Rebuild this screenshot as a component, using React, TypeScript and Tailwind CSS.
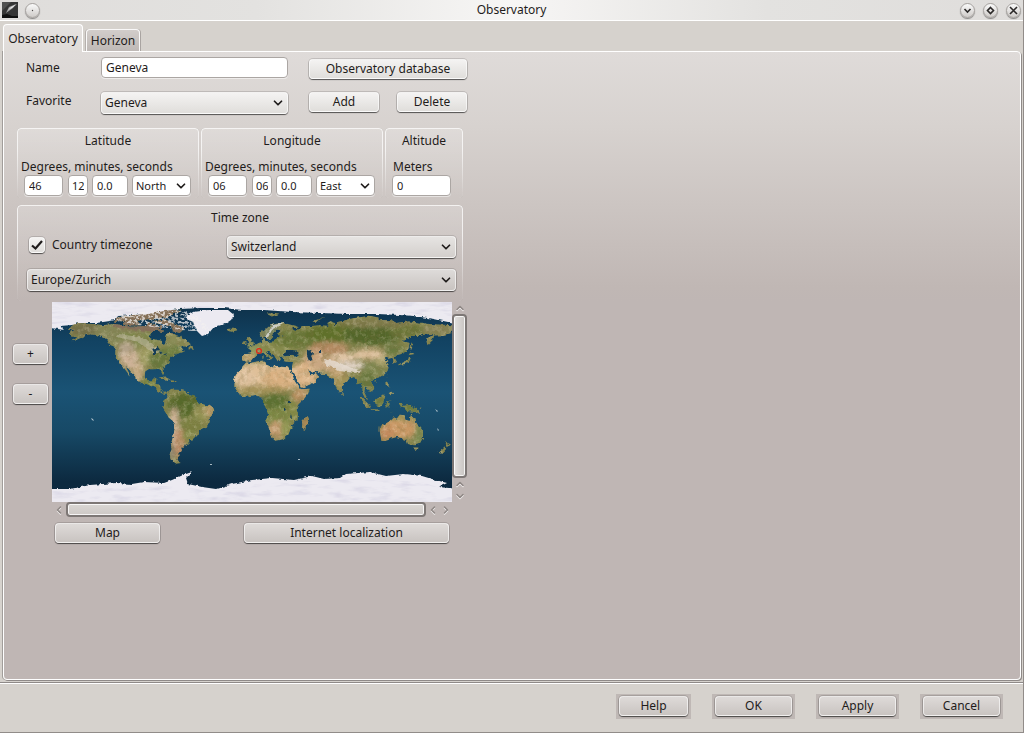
import type { ReactNode } from 'react';
import { ChevronDown, ChevronLeft, ChevronRight, ChevronUp } from 'lucide-react';

const RAISED =
  'rounded-[4px] border border-white/60 shadow-[0_0_0_1px_rgba(0,0,0,0.13),0_1px_1px_rgba(0,0,0,0.55)]';
const FACE_LIGHT = 'bg-linear-to-b from-[#f4f3f2] to-[#e0dedb]';
const FACE_DARK = 'bg-linear-to-b from-[#dedad8] to-[#c9c4c1]';
const FIELD =
  'h-[21px] min-w-0 rounded-[4px] border border-[#aba6a3] bg-white px-1 shadow-[0_1px_0_rgba(255,255,255,0.5)] outline-none';

function Button({ children, className = '', face = FACE_LIGHT, label }: { children: ReactNode; className?: string; face?: string; label?: string }) {
  return (
    <button type="button" aria-label={label} className={`flex h-5 items-center justify-center ${RAISED} ${face} ${className}`}>
      {children}
    </button>
  );
}

function Select({ label, options, className = '', look }: { label: string; options: string[]; className?: string; look: string }) {
  return (
    <div className={`relative ${className}`}>
      <select aria-label={label} className={`block w-full appearance-none pr-6 pl-[3px] outline-none ${look}`}>
        {options.map((o) => (
          <option key={o}>{o}</option>
        ))}
      </select>
      <ChevronDown className="pointer-events-none absolute top-1 right-[3px] size-3.5" strokeWidth={3} />
    </div>
  );
}

function Group({ title, className = '', children }: { title: string; className?: string; children: ReactNode }) {
  return (
    <fieldset
      aria-label={title}
      className={`relative min-w-0 rounded-[4px] bg-linear-to-b from-white/20 to-transparent before:pointer-events-none before:absolute before:inset-0 before:rounded-[4px] before:border before:border-white/70 before:mask-b-from-30% before:shadow-[-1px_0_0_rgba(0,0,0,0.15),1px_0_0_rgba(0,0,0,0.15)] ${className}`}
    >
      <div className="pt-1 text-center leading-[18px]">{title}</div>
      {children}
    </fieldset>
  );
}

function Coordinate({ title, degrees, minutes, options }: { title: string; degrees: string; minutes: string; options: string[] }) {
  return (
    <Group title={title} className="h-[70px] w-[182px]">
      <div className="pt-[9px] pl-1 leading-4">Degrees, minutes, seconds</div>
      <div className="flex pl-[7px] text-[11px]">
        <input aria-label={`${title} degrees`} defaultValue={degrees} className={`${FIELD} w-[39px]`} />
        <input aria-label={`${title} minutes`} defaultValue={minutes} className={`${FIELD} ml-[5px] w-5 !px-[3px]`} />
        <input aria-label={`${title} seconds`} defaultValue="0.0" className={`${FIELD} ml-1 w-9`} />
        <Select label={`${title} hemisphere`} options={options} className="ml-1 w-[59px]" look={FIELD} />
      </div>
    </Group>
  );
}

const LAND = [
  // North and Central America
  '-168,66 -163,67 -162,70 -156,71 -150,70.5 -141,70 -135,69 -128,70 -120,69.5 -115,68 -108,68 -101,68 -96,68 -94,72 -90,69 -86,68 -82,69 -82,67 -87,65 -92,62 -94,59 -92,57 -87,56 -82,55 -82,52.5 -80,51 -79,53 -77,56 -78,59 -77,62 -73,62 -70,61 -69,59 -66,58.5 -64,60 -62,57 -58,54 -56,52 -60,50 -66,50 -69,48 -65,49 -64,47 -61,46 -64,44.5 -66,44 -70,43.5 -70,42 -74,40.5 -76,37 -76,35 -81,31.5 -80,27 -81,25 -83,29 -85,30 -90,29.5 -94,29.5 -97,27.5 -97.5,22 -95,18.5 -91,18.5 -90,21 -87,21.5 -88,16 -84,15.8 -83,11 -81,9 -79,9.5 -77,8.5 -78,7.5 -80,7.5 -83,8.5 -86,10 -88,13 -92,14.5 -95,16 -100,17 -105,20 -106,23 -109,26 -112,30 -114.5,31.5 -112,27 -110,23 -112,25 -115,29 -117,32.5 -120,34.5 -122,37 -124,40 -124,46 -123,49 -128,51 -131,55 -135,58 -140,60 -146,61 -151,60 -154,58 -160,55.5 -164,54.5 -158,58 -162,59 -165,61 -164,63.5 -161,64.5 -166,65',
  // Arctic islands
  '-125,72 -122,76 -115,77 -110,78 -100,79 -96,83 -80,83 -64,83 -70,80 -78,76 -90,75 -98,74 -108,73 -117,73',
  '-117,70 -115,73 -105,73 -102,69 -110,69',
  '-90,73 -80,74 -72,71 -67,69 -62,66 -66,62 -72,64 -73,67 -80,70 -88,71',
  '-86,66 -80,65 -82,63 -86,64',
  // Newfoundland, Cuba, Hispaniola
  '-59,48 -56,51 -53,47 -58,47.5',
  '-85,22 -80,23 -74,20 -78,20',
  '-74,19.5 -69,19 -69,18 -74,18',
  // South America
  '-77,8.5 -75,11 -72,12.3 -71,11 -68,11 -64,10.5 -61,10 -58,7 -54,6 -51,4 -50,0 -48,-1 -44,-2.5 -40,-3 -37,-5 -35,-6 -35,-9 -39,-13 -39,-18 -41,-22 -45,-23.5 -48.5,-26 -49,-29 -53,-33 -55,-35 -58,-34 -57,-37 -62,-39 -62,-41 -65,-41 -64,-43 -67,-46 -66,-48 -69,-51 -68,-53 -65,-55 -69,-55.5 -74,-52 -75,-47 -73,-42 -74,-38 -71.5,-30 -70,-20 -72,-17 -76,-14 -79,-8 -81,-5 -80,-2.5 -80,1 -77,4 -77.5,7',
  // Iceland, Britain, Ireland
  '-24,65.5 -21,66 -15,66 -14,64.5 -19,63.3 -23,64',
  '-5,50 1,51 1.5,53 -1,54.5 -2,57.5 -5,58.5 -6,56 -3,54 -5,52',
  '-10,52 -6,52.3 -6,55 -9,54.5',
  // Eurasia
  '-9,43 -2,43.5 -1,46 -4.5,48.5 2,51 5,53 8,54 8,57 10.5,57.5 11,54 14,54 19,54.5 21,57 24,59 29,60 23,60 22,62 25,65 22,66 17,61 19,60 16,56 13,55.5 11,59 8,58 5,60 6,62.5 11,65 15,68.5 21,70.5 28,71 40,68 40,66.5 34,66.5 38,64 42,66.5 44,68.5 53,68.5 60,69 68,68.5 67,71 70,73 73,71 73,68 76,72 81,73 87,75 98,76.5 104,77.7 113,76 113,73.5 125,73.5 129,71 140,72.5 150,71.5 160,70 170,69.5 180,69 180,65 177,63 179,62 170,60 163,59.8 162,56 157,51 156,57 163,61.5 156,61 150,59.5 142,59.5 135,54.5 141,53 140,48 135,43.5 130,42.5 127.5,40 129.5,36 126.5,34.5 126,37.5 125,39.5 121.5,39 122,40.8 118,39 122,37 119.5,35 122,31 121,28 118,24.5 113,22 109,21 106,19 109,13 109,11.5 105,9 105,10.5 101,13 100,9 103.5,2 101,3 98.5,8 98.5,13 97,17 94,16 94,18 91,22.5 87,21 82,17 80,13.5 80,10 77.5,8 75,12.5 73,19 72.5,21.5 69,21 67,25 61,25.5 57,27 51,28 49,30.5 51,26 51.5,24 54,24 56.5,26 59.5,22.5 55,17.5 45,13 43,13 42,17 39,21 35,28 34.5,30 36,36 32,36 27,37 27,40.5 33,42 38,41 41.5,41.5 37,45 39,47 35,46 33,44.5 30.5,46.5 28,43.5 28.5,41 24,40.5 24,38 22.5,36.5 20,40 19,42 14,45.5 12.5,45 14,42.5 18.3,40.3 16,38 14,41 9,44.3 4,43.5 3,42 0,39.5 -2,37 -6,36.3 -9,37.5 -9,40',
  // Sicily and Sardinia
  '12.5,38 15.5,38 15,36.8', '8.5,41 9.7,41 9.3,39 8.5,39',
  // Africa
  '-6,35.7 -2,35 5,37 10,37.3 11,34 19,30.5 20,32.7 25,31.7 32,31.2 33,29 36,23 37.5,19 40,15 43,11.5 51,12 50,8 46,3 41,-2 39,-6 40.5,-11 40,-16 35,-20 35.5,-24 33,-26 32,-29 27,-33.5 20,-34.8 18,-33 16,-28.5 13,-20 12,-16 13.5,-11 12.5,-6 9,-1 9.5,4 6,4.3 2,6.3 -4,5 -8,4.5 -13,8 -15,11 -17,14.5 -16,19 -17,21 -15,25 -10,30 -9.5,32',
  '49,-12 50.5,-15.5 47,-25 44,-24 44.5,-17',
  // Novaya Zemlya, Svalbard
  '52,71 56,73.5 67,77 61,75.5 56,71', '12,79.5 20,80 24,79.5 17,77',
  // Japan, Sakhalin, Taiwan, Hainan, Sri Lanka
  '130,31.5 133,34 136,34 140,35 142,39.5 140.5,41 139.5,38 136,36.5 131,34',
  '140,42 142,45.3 145.5,43.3', '142,46 143.5,50 143,54 142,50', '120.5,23 121.5,25 121,22', '109,19 111,20 110,18.3', '80,9.5 82,7 80.5,6',
  // Maritime Southeast Asia
  '95.5,5.5 98,4 104,-2 106,-5.8 102,-4.5 98,1', '105.5,-6.5 111,-6.5 114.5,-8 108,-7.8',
  '109,1.5 113,3.5 117,7 119,5 117.5,1 116,-4 111,-3', '120,0.5 125,1.5 121,0 123,-4.5 120.5,-3 120,-5.5 119,-3',
  '120,18.5 122,18 122,14 124,13 120.5,14', '122,8 125.5,9.5 126,6.5 124,6',
  '131,-1 134,-1 135,-3.5 141,-2.6 147,-6 150.5,-10.5 147,-9.5 143,-8.5 138,-8 137,-5 133,-4',
  '149,-6 152,-4.5 150,-6.4', '123,-10 127,-8.5 124,-9.5',
  // Australia, Tasmania, New Zealand
  '114,-22 114,-26 115.5,-34 118,-35 124,-33 129,-31.5 134,-32.5 136,-35 138,-33.5 140,-38 146,-39 150,-37.5 153,-32 153,-26 149,-21 146,-19 145.5,-15 142.5,-11 141,-17 137,-16 136.5,-12 132,-11.5 129.5,-15 126,-14 122,-18',
  '145,-41 148,-41 147,-43.5', '173,-35 175,-37 178,-38 175,-41.5 174,-39', '172.5,-41 174,-42 170,-46.5 167,-46',
];

type Patch = [number, number, number, number, string];
const TERRAIN: Patch[] = [
  [-150, 65, 16, 6, '#74704a'], [-125, 62, 18, 9, '#858759'], [-100, 58, 22, 8, '#7f874d'], [-75, 55, 12, 6, '#8b8d58'],
  [-100, 67, 22, 3, '#8d7e60'], [-114, 46, 8, 9, '#b3a289'], [-108, 37, 12, 8, '#cdb297'], [-97, 41, 7, 9, '#a3a066'],
  [-83, 38, 11, 10, '#68783d'], [-72, 46, 9, 5, '#6f8042'], [-104, 26, 6, 7, '#c2a982'], [-92, 17, 9, 5, '#74813d'],
  [-60, -3, 17, 11, '#56692b'], [-45, -10, 9, 9, '#979456'], [-39, -8, 4, 6, '#b99b6c'], [-55, -20, 10, 8, '#7b8143'],
  [-71, -22, 4, 18, '#cfb397'], [-66, -38, 5, 14, '#b98c67'], [-58, -31, 6, 5, '#838b48'], [-73, -45, 2, 8, '#94887a'],
  [10, 24, 34, 11, '#dfbf97'], [25, 20, 16, 10, '#d9b081'], [-8, 22, 10, 9, '#e0c29f'], [46, 24, 12, 12, '#ddb68a'],
  [5, 11, 28, 4, '#a5935a'], [20, 0, 14, 8, '#5b7033'], [22, -12, 14, 7, '#7b8944'], [22, -25, 9, 8, '#c29c71'],
  [42, 6, 7, 6, '#ba9263'], [36, -8, 5, 9, '#848a47'], [30, -25, 5, 8, '#929855'], [47, -19, 3, 7, '#b0895a'],
  [0, 47, 11, 5, '#909a5e'], [-4, 40, 6, 4, '#c2a574'], [22, 49, 16, 7, '#878b4d'], [15, 63, 8, 8, '#7c8561'],
  [40, 57, 24, 8, '#697737'], [72, 62, 25, 8, '#5e7029'], [108, 60, 27, 9, '#52662b'], [140, 64, 18, 6, '#6a7538'],
  [110, 71, 35, 4, '#7f7a4b'], [165, 65, 14, 5, '#868255'], [68, 48, 18, 6, '#b38a62'], [55, 39, 10, 7, '#c9a37c'],
  [65, 34, 12, 7, '#c9a782'], [82, 40, 12, 4, '#e0c5a5'], [104, 43, 14, 5, '#d8bb97'], [88, 33, 13, 4, '#dfd2c4'],
  [78, 22, 8, 10, '#a39358'], [75, 27, 7, 4, '#c1a272'], [110, 30, 12, 7, '#7e8650'], [117, 37, 7, 4, '#afa46f'],
  [103, 19, 8, 8, '#68773e'], [127, 47, 9, 5, '#6b7940'], [114, 0, 7, 5, '#6e7e40'], [140, -5, 8, 4, '#6b7b3e'],
  [132, -24, 16, 9, '#ca9966'], [120, -28, 7, 6, '#c58c5f'], [149, -29, 4, 9, '#7d8a51'], [135, -14, 10, 3, '#a3965b'],
];

function WorldMap() {
  return (
    <svg viewBox="0 0 400 200" className="block w-full" role="img" aria-label="World map">
      <defs>
        <linearGradient id="ocean" x1="0" y1="0" x2="0" y2="1">
          <stop offset="0" stopColor="#0e3048" />
          <stop offset="0.2" stopColor="#124363" />
          <stop offset="0.45" stopColor="#1a5375" />
          <stop offset="0.65" stopColor="#174966" />
          <stop offset="0.9" stopColor="#0c293f" />
        </linearGradient>
        <clipPath id="land">
          {LAND.map((p) => (
            <polygon key={p} points={p} transform="translate(200 100) scale(1.1111 -1.1111)" />
          ))}
        </clipPath>
        <filter id="soften" x="-10%" y="-10%" width="120%" height="120%">
          <feGaussianBlur stdDeviation="2" />
        </filter>
        <filter id="coast" x="0" y="0" width="400" height="200" filterUnits="userSpaceOnUse">
          <feTurbulence type="fractalNoise" baseFrequency="0.25" numOctaves="2" seed="4" result="n" />
          <feDisplacementMap in="SourceGraphic" in2="n" scale="3.5" xChannelSelector="R" yChannelSelector="G" />
        </filter>
        <filter id="relief" x="0" y="0" width="400" height="200" filterUnits="userSpaceOnUse">
          <feTurbulence type="fractalNoise" baseFrequency="0.16" numOctaves="4" seed="9" />
          <feColorMatrix values="0 0 0 0 0.2  0 0 0 0 0.16  0 0 0 0 0.05  2.6 0 0 0 -1.15" />
        </filter>
        <filter id="glint" x="0" y="0" width="400" height="200" filterUnits="userSpaceOnUse">
          <feTurbulence type="fractalNoise" baseFrequency="0.2" numOctaves="4" seed="21" />
          <feColorMatrix values="0 0 0 0 1  0 0 0 0 0.88  0 0 0 0 0.7  0 2.6 0 0 -1.2" />
        </filter>
        <filter id="speckle" x="0" y="0" width="400" height="200" filterUnits="userSpaceOnUse">
          <feTurbulence type="fractalNoise" baseFrequency="0.3 0.5" numOctaves="2" seed="3" result="n" />
          <feColorMatrix in="n" values="0 0 0 0 0.9  0 0 0 0 0.88  0 0 0 0 0.87  8 0 0 0 -3.8" result="c" />
          <feComposite in="c" in2="SourceGraphic" operator="in" />
        </filter>
        <filter id="frost" x="0" y="0" width="400" height="200" filterUnits="userSpaceOnUse">
          <feTurbulence type="fractalNoise" baseFrequency="0.05 0.2" numOctaves="3" seed="8" result="n" />
          <feColorMatrix in="n" values="0 0 0 0 0.66  0 0 0 0 0.64  0 0 0 0 0.76  3 0 0 0 -1.4" result="c" />
          <feComposite in="c" in2="SourceGraphic" operator="in" />
        </filter>
      </defs>
      <rect width="400" height="200" fill="url(#ocean)" />
      <g filter="url(#coast)" transform="translate(1 0)">
        <g clipPath="url(#land)">
          <rect width="400" height="200" fill="#86864f" />
          <g filter="url(#soften)" transform="translate(200 100) scale(1.1111 -1.1111)">
            {TERRAIN.map(([x, y, rx, ry, fill]) => (
              <ellipse key={`${x},${y}`} cx={x} cy={y} rx={rx} ry={ry} fill={fill} />
            ))}
          </g>
          <rect width="400" height="200" filter="url(#relief)" opacity="0.32" />
          <rect width="400" height="200" filter="url(#glint)" opacity="0.25" />
          <path d="M60 8H168V32H120L60 25Z" fill="#846a5a" opacity="0.8" />
          <path d="M66 32L92 36L108 50L100 52L86 40L64 35Z" fill="#c5bda9" opacity="0.5" />
          <path d="M270 57L282 59L294 64L309 69L302 71L286 69L275 64Z" fill="#e6dcd2" opacity="0.8" />
          <path d="M212 35L220 23L232 21L219 28L214 37Z" fill="#dfe0e0" opacity="0.8" />
        </g>
        {/* Inland seas and lakes */}
        <g fill="#123c58">
          <path d="M254 49L258 48L260 52L258 54L260 58L256 59L254 54Z" />
          <path d="M232 48L240 48L246 52L238 54L231 53Z" />
          <path d="M266 49H268V51H266ZM235 99H238V101H235ZM231 105L233 108L231 109ZM238 112L239 116L237 115Z" />
          <path d="M99 47L105 45L107 48L103 49L103 53L101 53L101 49ZM106 49L110 51L107 52ZM108 54L114 51L112 54Z" />
        </g>
      </g>
      <g filter="url(#coast)" fill="#eceaf1">
        <path d="M-6-6H406V23L396 20L382 17L362 14L348 13L325 12L296 12L268 11L240 10L212 8L190 8L172 6L148 6L128 7L112 9L96 12L66 14L63 18L58 19L44 21L26 21L20 23L8 24L12 28L-6 25Z" />
        <path d="M133 15L141 10L157 8L176 8L182 13L179 18L173 22L162 25L156 32L150 34L145 29L141 20Z" />
        <path d="M-6 187H18L38 183L64 181L80 182L92 180L112 181L120 178L131 173L140 170L134 176L136 182L150 185L164 187L180 182L200 178L220 176L242 178L260 174L272 177L288 176L294 172L318 170L334 174L352 172L370 174L380 177L395 181L387 185L406 187V206H-6Z" />
      </g>
      <path d="M0 0H400V17L350 10L230 6H110L58 16L0 22ZM0 189H30L80 184H130L160 190L200 182L300 177L370 180L400 190V200H0Z" filter="url(#frost)" opacity="0.6" />
      <path d="M62 12L100 9H135L150 17L158 29H140L100 25L66 20Z" filter="url(#speckle)" opacity="0.7" />
      <g fill="#dce5e8" opacity="0.75">
        <path d="M39 116L41 117L42 119L40 118ZM158 162H160V163H158ZM246 157H248V158H246ZM383 107L386 109L385 110ZM385 126L387 128L386 129Z" />
      </g>
      <circle cx="207" cy="49" r="2.4" fill="none" stroke="#e12a1c" strokeWidth="1.3" />
    </svg>
  );
}

const ARROW = 'flex items-center justify-center text-[#8e8784] [&>svg]:drop-shadow-[0_1px_0_rgba(255,255,255,0.8)]';

function MapScroller() {
  return (
    <div className="grid w-[415px] grid-cols-[minmax(0,1fr)_15px]">
      <WorldMap />
      <div className="flex flex-col">
        <button type="button" aria-label="Scroll up" className={`${ARROW} h-3`}>
          <ChevronUp className="size-3" strokeWidth={3} />
        </button>
        <div role="scrollbar" aria-label="Vertical position" aria-controls="map" aria-valuenow={0} className="flex-1 rounded-[4px] border-2 border-[#7d7775] bg-linear-to-r from-[#e4e2e0] to-[#c8c4c1] shadow-[inset_0_0_0_1px_rgba(255,255,255,0.8)]" />
        <button type="button" aria-label="Page up" className={`${ARROW} h-3`}>
          <ChevronUp className="size-3" strokeWidth={3} />
        </button>
        <button type="button" aria-label="Scroll down" className={`${ARROW} h-3`}>
          <ChevronDown className="size-3" strokeWidth={3} />
        </button>
      </div>
      <div className="flex h-[15px]">
        <button type="button" aria-label="Scroll left" className={`${ARROW} w-3.5`}>
          <ChevronLeft className="size-3" strokeWidth={3} />
        </button>
        <div role="scrollbar" aria-label="Horizontal position" aria-controls="map" aria-valuenow={0} className="flex-1 rounded-[4px] border-2 border-[#7d7775] bg-linear-to-b from-[#dad7d4] to-[#cdc8c5] shadow-[inset_0_0_0_1px_rgba(255,255,255,0.8)]" />
        <button type="button" aria-label="Page left" className={`${ARROW} w-3.5`}>
          <ChevronLeft className="size-3" strokeWidth={3} />
        </button>
        <button type="button" aria-label="Scroll right" className={`${ARROW} w-3`}>
          <ChevronRight className="size-3" strokeWidth={3} />
        </button>
      </div>
    </div>
  );
}

function RoundButton({ label, children }: { label: string; children?: ReactNode }) {
  return (
    <button type="button" aria-label={label} className="flex size-[15px] items-center justify-center rounded-full border border-[#a5a19e] bg-linear-to-b from-[#fafafa] to-[#cfccc9] shadow-[0_1px_1px_rgba(0,0,0,0.4)]">
      <svg viewBox="0 0 13 13" className="size-[13px]" fill="none" stroke="#2b2928" strokeWidth="1.6">
        {children}
      </svg>
    </button>
  );
}

export default function App() {
  return (
    <div className="flex min-h-screen flex-col border-r border-b border-[#918c89] bg-[#d6d2cd] font-['Noto_Sans','Open_Sans',sans-serif] text-xs leading-4 text-[#1f1c1b]">
      <header className="grid h-[21px] grid-cols-[1fr_auto_1fr] items-center border-b border-white bg-[linear-gradient(to_right,#dfdddb_0%,#e3e2e0_25%,#f7f6f5_50%,#e3e2e0_75%,#dfdddb_100%)]">
        <div className="flex items-center gap-[7px] pl-0.5">
          <svg viewBox="0 0 16 16" className="size-4" aria-hidden="true">
            <rect width="16" height="16" fill="#353535" />
            <path d="M0 0H9L0 9Z" fill="#505050" />
            <path d="M4 11L7 5L14 2L11 6Z" fill="#a5a5a5" />
            <path d="M6 8L9 5L15 2L10 6Z" fill="#e6e6e6" />
            <path d="M0 13L5 12L10 14H16V16H0Z" fill="#101010" />
          </svg>
          <RoundButton label="Window menu">
            <circle cx="6.5" cy="6.5" r="0.7" fill="#4c4947" stroke="none" />
          </RoundButton>
        </div>
        <h1>Observatory</h1>
        <div className="flex items-center justify-end gap-2 pr-0.5">
          <RoundButton label="Minimize"><path d="M3.500 5L6.500 8L9.500 5" /></RoundButton>
          <RoundButton label="Maximize"><path d="M6.500 3.500L9.500 6.500L6.500 9.500L3.500 6.500Z" /></RoundButton>
          <RoundButton label="Close"><path d="M3 3L10 10M10 3L3 10" /></RoundButton>
        </div>
      </header>

      <div role="tablist" className="flex items-end pt-[3px] pl-[3px]">
        <button type="button" role="tab" aria-selected="true" className="relative -mb-px h-7 w-20 rounded-t-[4px] border border-b-0 border-white bg-linear-to-b from-[#e6e3e1] to-[#dfdbd8]">Observatory</button>
        <button type="button" role="tab" aria-selected="false" className="ml-[3px] h-[22px] w-[54px] rounded-t-[4px] border border-b-0 border-white/90 bg-linear-to-b from-[#d2cdca] to-[#bfb9b6] shadow-[1px_0_0_#a9a4a1,-1px_0_0_#b5b0ad]">Horizon</button>
      </div>

      <main className="mr-0.5 ml-[3px] flex-1 rounded-r-[4px] rounded-b-[4px] border border-white bg-[linear-gradient(to_bottom,#dfdbd9_0px,#d7d2cf_75px,#c0b7b4_235px,#bfb6b4_250px)] shadow-[1px_1px_0_#8f8a88,-1px_0_0_#a19d9a]">
        <div className="flex gap-[21px] pt-[5px] pl-[22px]">
          <div className="grid grid-cols-[75px_187px] content-start gap-y-3.5">
            <label htmlFor="name" className="pt-[3px]">Name</label>
            <input id="name" defaultValue="Geneva" className={FIELD} />
            <span className="pt-px">Favorite</span>
            <Select label="Favorite" options={['Geneva']} look={`h-[22px] ${RAISED} ${FACE_LIGHT}`} />
          </div>
          <div className="grid w-[158px] grid-cols-[70px_70px] content-start justify-between gap-y-[13px] pt-0.5">
            <Button className="col-span-2">Observatory database</Button>
            <Button>Add</Button>
            <Button>Delete</Button>
          </div>
        </div>

        <div className="flex gap-0.5 pt-3.5 pl-[13px]">
          <Coordinate title="Latitude" degrees="46" minutes="12" options={['North', 'South']} />
          <Coordinate title="Longitude" degrees="06" minutes="06" options={['East', 'West']} />
          <Group title="Altitude" className="h-[70px] w-[78px]">
            <label htmlFor="meters" className="block pt-[9px] pl-2 leading-4">Meters</label>
            <input id="meters" defaultValue="0" className={`${FIELD} ml-[7px] block w-[59px] text-[11px]`} />
          </Group>
        </div>

        <div className="pt-[7px] pl-[13px]">
          <Group title="Time zone" className="h-24 w-[446px]">
            <div className="flex items-center justify-between pt-[9px] pr-[7px] pl-3">
              <label className="flex items-center gap-[7px] pb-1">
                <span className="relative flex size-4">
                  <input type="checkbox" defaultChecked className={`peer size-4 appearance-none ${RAISED} ${FACE_LIGHT}`} />
                  <svg viewBox="0 0 16 16" className="pointer-events-none absolute inset-0 hidden size-4 peer-checked:block" fill="none" stroke="#1f1c1b" strokeWidth="2.2">
                    <path d="M3 8.500L6.500 11.500L13 4" />
                  </svg>
                </span>
                Country timezone
              </label>
              <Select label="Country" options={['Switzerland']} className="w-[229px]" look={`h-[22px] ${RAISED} bg-linear-to-b from-[#e6e4e2] to-[#d3cfcc]`} />
            </div>
            <div className="pt-[11px] pr-[7px] pl-2.5">
              <Select label="Time zone" options={['Europe/Zurich']} look={`h-[22px] ${RAISED} bg-linear-to-b from-[#dedbd9] to-[#c9c4c1]`} />
            </div>
          </Group>
        </div>

        <div className="flex gap-1 pt-px pl-[9px]">
          <div className="flex flex-col gap-5 pt-[42px]">
            <Button className="w-[35px]" face={FACE_DARK} label="Zoom in">+</Button>
            <Button className="w-[35px]" face={FACE_DARK} label="Zoom out">-</Button>
          </div>
          <div id="map">
            <MapScroller />
            <div className="flex w-[397px] justify-between pt-1.5 pl-[3px]">
              <Button className="w-[105px]" face={FACE_DARK}>Map</Button>
              <Button className="w-[205px]" face={FACE_DARK}>Internet localization</Button>
            </div>
          </div>
        </div>
      </main>

      <footer className="mt-[3px] flex h-[49px] justify-end gap-[21px] border-t border-white pt-2.5 pr-5 shadow-[0_-1px_0_#8f8a88]">
        <div className="h-[25px] w-[75px] bg-[#bfb8b5] px-[3px] py-0.5"><Button className="w-full" face={FACE_DARK}>Help</Button></div>
        <div className="h-[25px] w-[83px] bg-[#bfb8b5] px-[3px] py-0.5"><Button className="w-full" face={FACE_DARK}>OK</Button></div>
        <div className="h-[25px] w-[83px] bg-[#bfb8b5] px-[3px] py-0.5"><Button className="w-full" face={FACE_DARK}>Apply</Button></div>
        <div className="h-[25px] w-[83px] bg-[#bfb8b5] px-[3px] py-0.5"><Button className="w-full" face={FACE_DARK}>Cancel</Button></div>
      </footer>
    </div>
  );
}
